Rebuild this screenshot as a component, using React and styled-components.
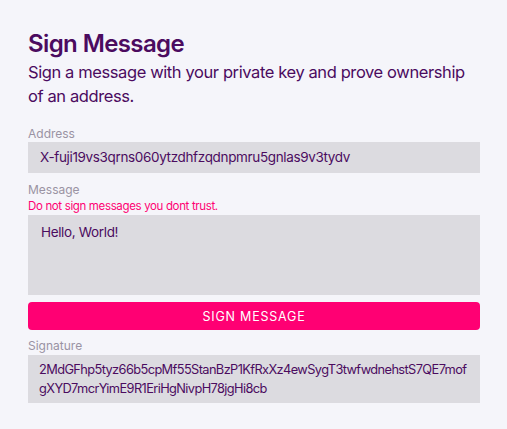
import React from 'react';
import styled, { createGlobalStyle } from 'styled-components';

const GlobalStyle = createGlobalStyle`
  html, body {
    margin: 0;
    padding: 0;
    background: #f5f5fa;
  }
  body {
    font-family: Inter, "Noto Sans", sans-serif;
  }
`;

const Page = styled.div`
  width: 507px;
  height: 429px;
  box-sizing: border-box;
  padding: 28px 27px 0 28px;
  background: #f5f5fa;
`;

const Title = styled.h1`
  margin: 0;
  font-size: 24px;
  line-height: 32px;
  font-weight: 600;
  letter-spacing: -0.6px;
  color: #4b0b5f;
`;

const Subtitle = styled.p`
  margin: 0 0 18px;
  font-size: 16.5px;
  line-height: 24px;
  letter-spacing: -0.4px;
  color: #4b0b5f;
`;

const Label = styled.div`
  font-size: 12px;
  line-height: 16px;
  color: #9a93a3;
  margin-bottom: ${p => p.$mb || 0}px;
`;

const Warning = styled.div`
  font-size: 11.5px;
  line-height: 17px;
  letter-spacing: -0.35px;
  color: #ff0073;
`;

const Field = styled.div`
  background: #dcdbe0;
  color: #4b0b5f;
  font-size: ${p => p.$fs || 13.5}px;
  letter-spacing: ${p => p.$ls || -0.35}px;
  line-height: 19px;
  padding: ${p => p.$pad || '6px 12px'};
  min-height: ${p => p.$min || 0}px;
  box-sizing: border-box;
  margin-bottom: ${p => p.$mb || 0}px;
  word-break: break-all;
`;

const SignButton = styled.button`
  display: block;
  width: 100%;
  height: 28px;
  border: none;
  border-radius: 4px;
  background: #ff0073;
  color: #fff;
  font-family: inherit;
  font-size: 12.5px;
  letter-spacing: 0.8px;
  text-transform: uppercase;
  margin: 7px 0 8px;
  cursor: pointer;
`;

export default function App() {
  return (
    <>
      <GlobalStyle />
      <Page>
        <Title>Sign Message</Title>
        <Subtitle>Sign a message with your private key and prove ownership of an address.</Subtitle>
        <Label>Address</Label>
        <Field $min={31} $mb={9}>X-fuji19vs3qrns060ytzdhfzqdnpmru5gnlas9v3tydv</Field>
        <Label>Message</Label>
        <Warning>Do not sign messages you dont trust.</Warning>
        <Field $min={80} $pad="8px 13px">Hello, World!</Field>
        <SignButton>Sign Message</SignButton>
        <Label $mb={1}>Signature</Label>
        <Field $min={48} $pad="5px 11px 5px 11px" $fs={12.8} $ls={-0.6}>2MdGFhp5tyz66b5cpMf55StanBzP1KfRxXz4ewSygT3twfwdnehstS7QE7mofgXYD7mcrYimE9R1EriHgNivpH78jgHi8cb</Field>
      </Page>
    </>
  );
}
